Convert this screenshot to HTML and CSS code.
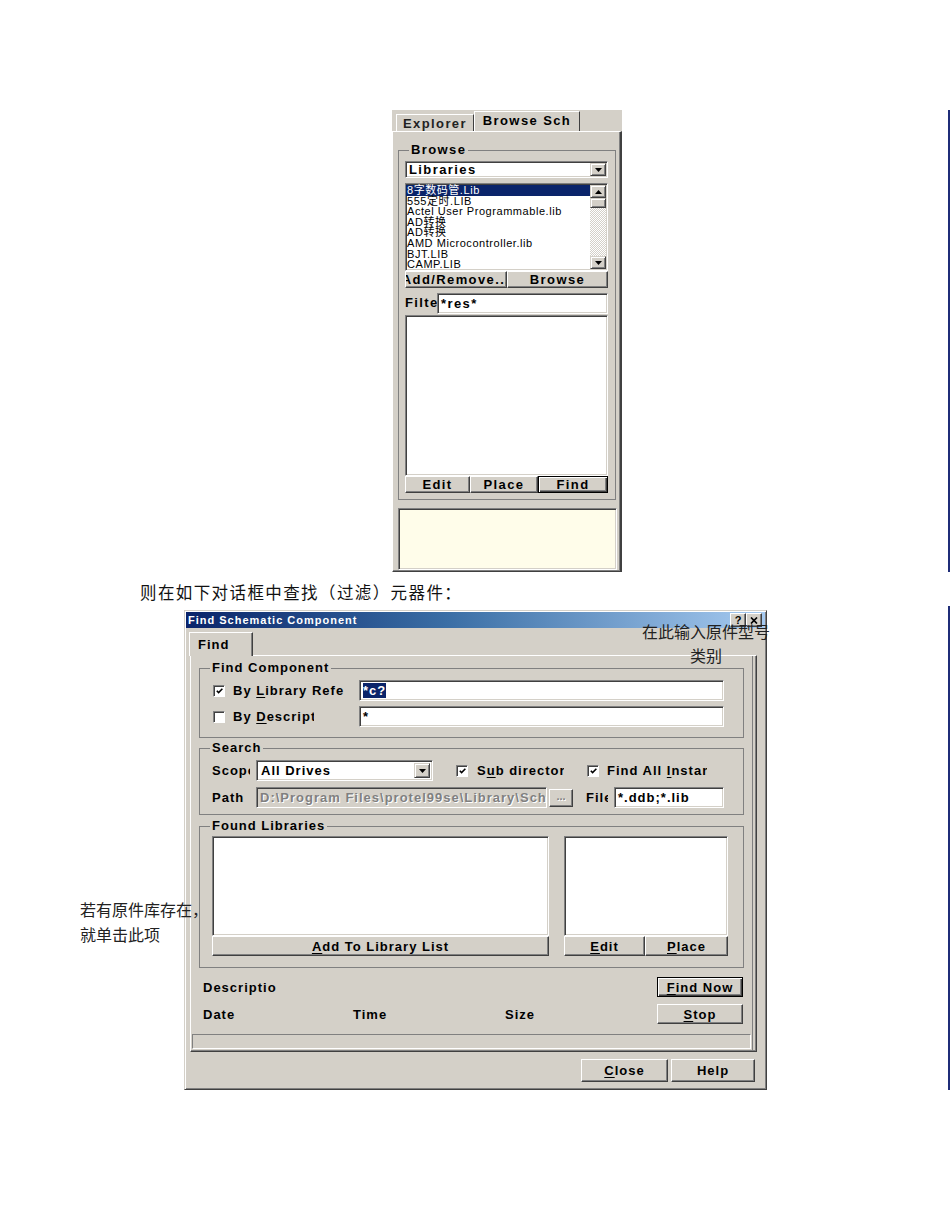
FILE: index.html
```html
<!DOCTYPE html>
<html lang="zh-CN">
<head>
    <meta charset="UTF-8">
    <title>Find Schematic Component</title>
    <link rel="stylesheet" href="styles.css">
</head>
<body>
    <section class="sheet sheet-browser">
        <div class="browser">
            <div class="browser-tabs">
                <span class="ptab">Explorer</span>
                <span class="ptab ptab-active">Browse Sch</span>
            </div>
            <div class="browser-page">
                <fieldset class="group">
                    <legend>Browse</legend>
                    <div class="group-body body-browse">
                        <div class="combo combo-libs">
                            <span class="combo-text">Libraries</span>
                            <span class="arrow-btn"><svg width="7" height="4" viewBox="0 0 7 4"><path d="M0 0h7L3.5 4z"/></svg></span>
                        </div>
                        <div class="liblist">
                            <ul class="liblist-items">
                                <li class="selected">8字数码管.Lib</li>
                                <li>555定时.LIB</li>
                                <li>Actel User Programmable.lib</li>
                                <li>AD转换</li>
                                <li>AD转换</li>
                                <li>AMD Microcontroller.lib</li>
                                <li>BJT.LIB</li>
                                <li>CAMP.LIB</li>
                            </ul>
                            <div class="vscroll">
                                <span class="arrow-btn scroll-btn"><svg width="7" height="4" viewBox="0 0 7 4"><path d="M0 4h7L3.5 0z"/></svg></span>
                                <span class="vscroll-thumb"></span>
                                <span class="vscroll-track"></span>
                                <span class="arrow-btn scroll-btn"><svg width="7" height="4" viewBox="0 0 7 4"><path d="M0 0h7L3.5 4z"/></svg></span>
                            </div>
                        </div>
                        <div class="btn-strip">
                            <span class="btn btn-addremove">Add/Remove...</span>
                            <span class="btn btn-browse">Browse</span>
                        </div>
                        <div class="filter-row">
                            <span class="lbl lbl-filter">Filter</span>
                            <span class="field field-grow">*res*</span>
                        </div>
                        <div class="well well-comp"></div>
                        <div class="btn-strip">
                            <span class="btn btn-edit">Edit</span>
                            <span class="btn btn-place">Place</span>
                            <span class="btn btn-find btn-default">Find</span>
                        </div>
                    </div>
                </fieldset>
                <div class="hint-box"></div>
            </div>
        </div>
    </section>

    <p class="caption">则在如下对话框中查找（过滤）元器件：</p>

    <section class="sheet sheet-dialog">
        <div class="dialog">
            <div class="titlebar">
                <span class="title">Find Schematic Component</span>
                <span class="title-btns">
                    <span class="tbtn">?</span>
                    <span class="tbtn"><svg width="8" height="7" viewBox="0 0 8 7"><path d="M1 0.5L7 6.5M7 0.5L1 6.5" stroke="#000" stroke-width="1.7"/></svg></span>
                </span>
            </div>
            <div class="dlg-tabs">
                <span class="dtab">Find</span>
            </div>
            <div class="tabpage">
                <fieldset class="group">
                    <legend>Find Component</legend>
                    <div class="group-body body-component">
                        <div class="row">
                            <span class="check"><svg width="10" height="10" viewBox="0 0 10 10"><path d="M2 4.6L4 6.8L8.2 2.4" fill="none" stroke="#000" stroke-width="1.7"/></svg></span>
                            <span class="lbl lbl-by">By <u>L</u>ibrary Reference</span>
                            <span class="field field-grow"><span class="selection">*c?</span></span>
                        </div>
                        <div class="row">
                            <span class="check"></span>
                            <span class="lbl lbl-by lbl-desc-short">By <u>D</u>escription</span>
                            <span class="field field-grow">*</span>
                        </div>
                    </div>
                </fieldset>

                <fieldset class="group group-search">
                    <legend>Search</legend>
                    <div class="group-body body-search">
                        <div class="row">
                            <span class="lbl lbl-short lbl-scope">Scope</span>
                            <div class="combo combo-scope">
                                <span class="combo-text">All Drives</span>
                                <span class="arrow-btn"><svg width="7" height="4" viewBox="0 0 7 4"><path d="M0 0h7L3.5 4z"/></svg></span>
                            </div>
                            <span class="check check-sub"><svg width="10" height="10" viewBox="0 0 10 10"><path d="M2 4.6L4 6.8L8.2 2.4" fill="none" stroke="#000" stroke-width="1.7"/></svg></span>
                            <span class="lbl lbl-subdir">S<u>u</u>b directories</span>
                            <span class="check check-all"><svg width="10" height="10" viewBox="0 0 10 10"><path d="M2 4.6L4 6.8L8.2 2.4" fill="none" stroke="#000" stroke-width="1.7"/></svg></span>
                            <span class="lbl lbl-findall">Find All <u>I</u>nstances</span>
                        </div>
                        <div class="row row-path">
                            <span class="lbl lbl-short">Path</span>
                            <span class="field field-disabled">D:\Program Files\protel99se\Library\Sch</span>
                            <span class="btn btn-dots">...</span>
                            <span class="lbl lbl-file">File</span>
                            <span class="field field-grow">*.ddb;*.lib</span>
                        </div>
                    </div>
                </fieldset>

                <fieldset class="group group-found">
                    <legend>Found Libraries</legend>
                    <div class="group-body body-found">
                        <div class="found-col found-libs">
                            <div class="well well-found"></div>
                            <span class="btn btn-wide"><span><u>A</u>dd To Library List</span></span>
                        </div>
                        <div class="found-col found-parts">
                            <div class="well well-found"></div>
                            <div class="btn-strip">
                                <span class="btn btn-half"><span><u>E</u>dit</span></span>
                                <span class="btn btn-half btn-place-wide"><span><u>P</u>lace</span></span>
                            </div>
                        </div>
                    </div>
                </fieldset>

                <div class="info">
                    <div class="info-row">
                        <span class="lbl lbl-desc">Description</span>
                        <span class="btn btn-action btn-default"><span><u>F</u>ind Now</span></span>
                    </div>
                    <div class="info-row info-stats">
                        <span>Date</span>
                        <span>Time</span>
                        <span>Size</span>
                        <span class="btn btn-action"><span><u>S</u>top</span></span>
                    </div>
                </div>
                <div class="statusbar"></div>
            </div>
            <div class="dlg-footer">
                <span class="btn btn-footer btn-close"><span><u>C</u>lose</span></span>
                <span class="btn btn-footer btn-help">Help</span>
            </div>
            <div class="note note-top">在此输入原件型号<br>类别</div>
        </div>
        <div class="note note-side">若有原件库存在，<br>就单击此项</div>
    </section>
</body>
</html>
```

FILE: styles.css
```css
* {
    box-sizing: border-box;
}
body {
    margin: 0;
    width: 950px;
    padding-top: 110px;
    background: #fff;
    font-family: "Liberation Sans", Arial, sans-serif;
    font-weight: bold;
    font-size: 13px;
    letter-spacing: 1px;
    color: #000;
}
u {
    text-decoration-thickness: 1px;
    text-underline-offset: 2px;
}

/* page strips with the blue rule at the right margin */
.sheet {
    width: 950px;
    border-right: 2px solid #1f2d78;
}
.sheet-browser {
    height: 462px;
    padding-left: 392px;
}
.caption {
    margin: 8px 0 0 140px;
    height: 20px;
    line-height: 20px;
    font: 16.5px "Liberation Serif", "Noto Sans CJK SC", serif;
    letter-spacing: 1.4px;
    color: #111;
}
.sheet-dialog {
    position: relative;
    height: 484px;
    margin-top: 6px;
    padding: 4px 0 0 184px;
}

/* shared win32 bits */
.btn {
    display: flex;
    align-items: center;
    justify-content: center;
    overflow: hidden;
    white-space: nowrap;
    background: #d4d0c8;
    border: 1px solid;
    border-color: #fff #404040 #404040 #fff;
    box-shadow: inset -1px -1px #808080;
    flex: none;
}
.btn-default {
    border-color: #000;
    box-shadow: inset 1px 1px #fff, inset -1px -1px #404040, inset -2px -2px #808080;
}
.field, .combo, .well, .liblist {
    background: #fff;
    border: 1px solid;
    border-color: #808080 #fff #fff #808080;
    box-shadow: inset 1px 1px #404040, inset -1px -1px #d4d0c8;
}
.field {
    display: flex;
    align-items: center;
    padding: 0 3px;
    white-space: nowrap;
    overflow: hidden;
}
.field-grow {
    flex: 1;
}
.combo {
    display: flex;
    align-items: center;
    padding: 2px;
}
.combo-text {
    flex: 1;
    padding-left: 2px;
    white-space: nowrap;
}
.arrow-btn {
    display: flex;
    align-items: center;
    justify-content: center;
    width: 16px;
    height: 100%;
    background: #d4d0c8;
    border: 1px solid;
    border-color: #d4d0c8 #404040 #404040 #d4d0c8;
    box-shadow: inset 1px 1px #fff, inset -1px -1px #808080;
}
.lbl {
    white-space: nowrap;
    overflow: hidden;
    flex: none;
}
.check {
    display: flex;
    align-items: center;
    justify-content: center;
    width: 12px;
    height: 12px;
    flex: none;
    background: #fff;
    border: 1px solid;
    border-color: #808080 #fff #fff #808080;
    box-shadow: inset 1px 1px #404040;
}
.check svg {
    margin: 1px 0 0 1px;
}

/* etched group boxes */
.group {
    margin: 0;
    padding: 0;
    min-width: 0;
    border: 1px solid #808080;
}
.group legend {
    margin-left: 10px;
    padding: 0 2px;
    line-height: 14px;
}
.group-body {
    display: flex;
    flex-direction: column;
}
.row {
    display: flex;
    align-items: center;
    height: 21px;
}

/* ---- browse panel ---- */
.browser {
    display: flex;
    flex-direction: column;
    width: 230px;
    height: 462px;
    background: #d4d0c8;
}
.browser-tabs {
    display: flex;
    align-items: flex-end;
    height: 21px;
    padding-left: 4px;
}
.ptab {
    display: flex;
    align-items: center;
    justify-content: center;
    height: 17px;
    width: 78px;
    font-size: 13px;
    letter-spacing: 1.4px;
    border: 1px solid;
    border-bottom: 0;
    border-color: #fff #404040 transparent #fff;
    color: #222;
}
.ptab-active {
    width: 106px;
    height: 20px;
    padding-bottom: 2px;
    color: #000;
}
.browser-page {
    flex: 1;
    display: flex;
    flex-direction: column;
    padding: 11px 3px 1px 5px;
    border: 1px solid;
    border-top-color: #fff;
    border-left-color: #fff;
    border-right: 2px solid #404040;
    border-bottom-color: #404040;
    box-shadow: inset -1px -1px #808080;
}
.browser-page .group {
    width: 218px;
}
.browser-page .group,
.browser-page .lbl,
.browser-page .btn,
.browser-page .field,
.browser-page .combo {
    letter-spacing: 1.4px;
}
.body-browse {
    padding: 4px 7px 6px 6px;
}
.combo-libs {
    height: 17px;
    padding: 1px;
}
.liblist {
    display: flex;
    height: 88px;
    margin-top: 5px;
    padding: 0 1px 0 0;
}
.liblist-items {
    flex: 1;
    margin: 0;
    padding: 1px 0 0 0;
    list-style: none;
    font: 11px "Liberation Sans", "Noto Sans CJK SC", sans-serif;
    line-height: 10.6px;
    letter-spacing: 0.55px;
    overflow: hidden;
}
.liblist-items li {
    padding-left: 1px;
    white-space: nowrap;
}
.liblist-items .selected {
    background: #0a246a;
    color: #fff;
}
.vscroll {
    display: flex;
    flex-direction: column;
    width: 16px;
    padding: 1px 0;
}
.scroll-btn {
    height: 13px;
}
.vscroll-thumb {
    height: 10px;
    background: #d4d0c8;
    border: 1px solid;
    border-color: #d4d0c8 #404040 #404040 #d4d0c8;
    box-shadow: inset 1px 1px #fff, inset -1px -1px #808080;
}
.vscroll-track {
    flex: 1;
    background: repeating-conic-gradient(#d4d0c8 0 25%, #fff 0 50%) 0 0 / 2px 2px;
}
.btn-strip {
    display: flex;
}
.body-browse .btn {
    height: 17px;
}
.btn-addremove { width: 102px; }
.btn-browse { width: 101px; }
.btn-edit { width: 65px; }
.btn-place { width: 68px; }
.btn-find { width: 70px; }
.filter-row {
    display: flex;
    height: 20px;
    margin-top: 5px;
}
.lbl-filter {
    width: 32px;
    line-height: 20px;
}
.well-comp {
    height: 161px;
    margin-top: 2px;
}
.hint-box {
    width: 219px;
    height: 62px;
    margin-top: 8px;
    background: #fffdea;
    border: 1px solid;
    border-color: #808080 #fff #fff #808080;
    box-shadow: inset 1px 1px #404040, inset -1px -1px #d4d0c8;
}

/* ---- find dialog ---- */
.dialog {
    position: relative;
    display: flex;
    flex-direction: column;
    width: 583px;
    height: 480px;
    padding: 1px;
    background: #d4d0c8;
    border: 1px solid;
    border-color: #d4d0c8 #404040 #404040 #d4d0c8;
    box-shadow: inset 1px 1px #fff, inset -1px -1px #808080;
}
.titlebar {
    display: flex;
    align-items: center;
    justify-content: space-between;
    height: 16px;
    padding: 0 3px 0 2px;
    background: linear-gradient(to right, #0a246a, #3a6ea5 45%, #a6caf0);
}
.title {
    color: #fff;
    font-size: 11px;
    letter-spacing: 1px;
}
.title-btns {
    display: flex;
}
.tbtn {
    display: flex;
    align-items: center;
    justify-content: center;
    width: 16px;
    height: 14px;
    font-size: 11px;
    line-height: 1;
    letter-spacing: 0;
    background: #d4d0c8;
    border: 1px solid;
    border-color: #fff #404040 #404040 #fff;
    box-shadow: inset -1px -1px #808080;
}
.dlg-tabs {
    display: flex;
    height: 23px;
    margin-top: 4px;
    padding-left: 3px;
}
.dtab {
    position: relative;
    z-index: 1;
    width: 64px;
    height: 24px;
    padding: 4px 0 0 8px;
    background: #d4d0c8;
    border: 1px solid;
    border-bottom: 0;
    border-color: #fff #404040 transparent #fff;
    box-shadow: inset -1px 0 #808080;
}
.tabpage {
    height: 397px;
    margin: 0 8px 0 4px;
    padding: 5px 12px 2px 8px;
    border: 1px solid;
    border-color: #fff #404040 #404040 #fff;
    box-shadow: inset -1px -1px #808080, inset -3px 0 #d4d0c8, inset -4px 0 #808080;
}
.group-search {
    margin-top: 3px;
}
.group-found {
    margin-top: 4px;
}
.body-component {
    gap: 5px;
    padding: 5px 19px 10px 13px;
}
.lbl-by {
    width: 111px;
    margin: 0 15px 0 8px;
}
.lbl-desc-short {
    width: 81px;
    margin-right: 45px;
}
.field-grow, .body-component .field {
    height: 21px;
}
.selection {
    background: #0a246a;
    color: #fff;
}
.body-search {
    gap: 6px;
    padding: 5px 19px 6px 12px;
}
.lbl-short {
    width: 41px;
}
.lbl-scope {
    width: 38px;
    margin-right: 3px;
}
.combo-scope {
    width: 177px;
    height: 21px;
    margin-left: 3px;
}
.check-sub,
.check-all {
    margin-left: 23px;
}
.lbl-subdir {
    width: 87px;
    margin-left: 9px;
}
.lbl-findall {
    width: 100px;
    margin-left: 8px;
}
.field-disabled {
    width: 291px;
    height: 21px;
    margin-left: 3px;
    background: #d4d0c8;
    color: #808080;
    text-shadow: 1px 1px #fff;
}
.btn-dots {
    width: 24px;
    height: 18px;
    margin-left: 2px;
    padding-bottom: 4px;
    font-size: 11px;
    letter-spacing: 0;
    color: #808080;
    text-shadow: 1px 1px #fff;
}
.lbl-file {
    width: 22px;
    margin: 0 6px 0 13px;
}
.body-found {
    flex-direction: row;
    gap: 15px;
    padding: 3px 15px 11px 12px;
}
.found-col {
    display: flex;
    flex-direction: column;
}
.found-libs {
    width: 337px;
}
.found-parts {
    flex: 1;
}
.well-found {
    height: 100px;
}
.btn-wide {
    height: 20px;
}
.btn-half {
    width: 81px;
    height: 20px;
}
.btn-place-wide {
    flex: 1;
}
.info {
    margin: 9px 1px 0 4px;
}
.info-row {
    display: flex;
    align-items: center;
    justify-content: space-between;
    height: 20px;
}
.info-stats {
    display: grid;
    grid-template-columns: 150px 152px 1fr 86px;
    margin-top: 7px;
}
.lbl-desc {
    width: 73px;
}
.btn-action {
    width: 86px;
    height: 20px;
}
.statusbar {
    height: 15px;
    margin: 10px -7px 0;
    border: 1px solid;
    border-color: #808080 #fff #fff #808080;
}
.dlg-footer {
    display: flex;
    justify-content: flex-end;
    gap: 3px;
    margin: 7px 10px 0 0;
}
.btn-footer {
    height: 23px;
}
.btn-close { width: 87px; }
.btn-help { width: 84px; }

/* handwritten notes laid over the dialog */
.note {
    position: absolute;
    z-index: 2;
    font: 16px "Liberation Serif", "Noto Sans CJK SC", serif;
    letter-spacing: 0;
    color: #222;
    white-space: nowrap;
}
.note-top {
    left: 456px;
    top: 10px;
    width: 130px;
    line-height: 24px;
    text-align: center;
}
.note-side {
    left: 80px;
    top: 292px;
    line-height: 25px;
}
```
